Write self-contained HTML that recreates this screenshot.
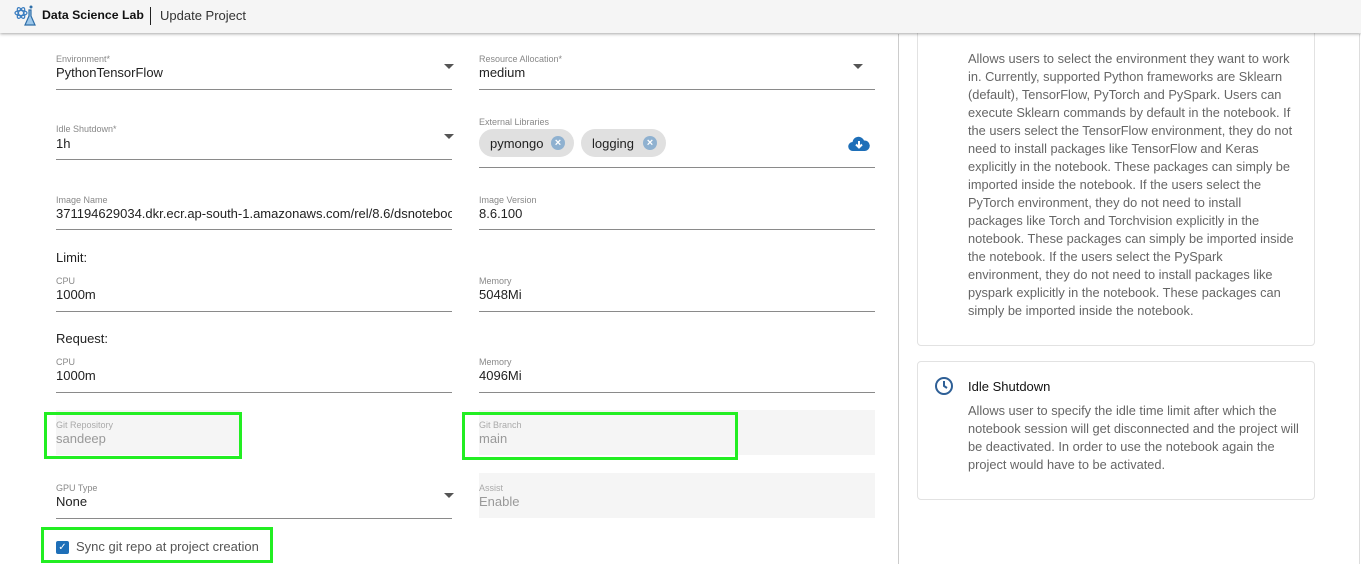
<!DOCTYPE html>
<html><head><style>
*{box-sizing:border-box;margin:0;padding:0}
body{width:1361px;height:564px;overflow:hidden;background:#fff;font-family:"Liberation Sans",sans-serif;position:relative;color:#222}
.hdr{position:absolute;left:0;top:0;width:1361px;height:33px;background:#f5f5f5;box-shadow:0 1px 3px rgba(0,0,0,.35);z-index:2}
.a{position:absolute}
.lbl{position:absolute;font-size:9px;color:#888}
.val{position:absolute;font-size:13px;color:#222}
.ul{position:absolute;height:1px;background:#8a8a8a}
.arr{position:absolute;width:0;height:0;border-left:5px solid transparent;border-right:5px solid transparent;border-top:5px solid #555}
.grey{position:absolute;background:#f5f5f5}
.green{position:absolute;border:3px solid #22ee22}
.card{position:absolute;border:1px solid #e2e2e2;border-radius:4px;background:#fff}
.txt{font-size:12.5px;line-height:18px;color:#666}
.chip{position:absolute;height:28px;border-radius:14px;background:#e0e0e0;font-size:13px;color:#222;padding:7px 0 0 11px}
.x{position:absolute;top:7px;width:14px;height:14px;border-radius:50%;background:#8fb1d0;color:#fff;font-size:11px;line-height:14px;text-align:center;font-weight:bold}
</style></head><body>
<div class="hdr">
<svg class="a" style="left:14px;top:4px" width="24" height="24" viewBox="0 0 24 24"><ellipse cx="7" cy="9" rx="6" ry="2.5" fill="none" stroke="#3a7dc0" stroke-width="1.2"/><ellipse cx="7" cy="9" rx="6" ry="2.5" transform="rotate(60 7 9)" fill="none" stroke="#3a7dc0" stroke-width="1.2"/><ellipse cx="7" cy="9" rx="6" ry="2.5" transform="rotate(-60 7 9)" fill="none" stroke="#3a7dc0" stroke-width="1.2"/><path d="M15 6v6l-4 9h10l-4-9V6z" fill="#9cc7ea" stroke="#2e6ea8" stroke-width="1.2"/><circle cx="17" cy="3" r="1.5" fill="#2e6ea8"/></svg>
<div class="a" style="left:42px;top:8px;font-size:12.3px;font-weight:bold;color:#111">Data Science Lab</div>
<div class="a" style="left:150px;top:7px;width:1px;height:18px;background:#222"></div>
<div class="a" style="left:160px;top:8px;font-size:13px;color:#333">Update Project</div>
</div>

<div class="lbl" style="left:56px;top:54px">Environment*</div><div class="val" style="left:56px;top:65px">PythonTensorFlow</div><div class="arr" style="left:444px;top:64px"></div><div class="ul" style="left:56px;top:89px;width:396px"></div>
<div class="lbl" style="left:479px;top:54px">Resource Allocation*</div><div class="val" style="left:479px;top:65px">medium</div><div class="arr" style="left:853px;top:64px"></div><div class="ul" style="left:479px;top:89px;width:396px"></div>

<div class="lbl" style="left:56px;top:124px">Idle Shutdown*</div><div class="val" style="left:56px;top:136px">1h</div><div class="arr" style="left:444px;top:134px"></div><div class="ul" style="left:56px;top:159px;width:396px"></div>
<div class="lbl" style="left:479px;top:117px">External Libraries</div>
<div class="chip" style="left:479px;top:129px;width:95px">pymongo<span class="x" style="left:72px">×</span></div>
<div class="chip" style="left:581px;top:129px;width:85px">logging<span class="x" style="left:62px">×</span></div>
<svg class="a" style="left:848px;top:136px" width="22" height="16" viewBox="0 0 22 16"><path d="M5 15a4.5 4.5 0 0 1-.5-9A6 6 0 0 1 16 4.5 5 5 0 0 1 17 15z" fill="#1e6fb8"/><path d="M11 5v6M8 8.5l3 3 3-3" stroke="#fff" stroke-width="2" fill="none"/></svg>
<div class="ul" style="left:479px;top:167px;width:396px"></div>

<div class="lbl" style="left:56px;top:195px">Image Name</div><div class="val" style="left:56px;top:206px;width:396px;overflow:hidden;white-space:nowrap">371194629034.dkr.ecr.ap-south-1.amazonaws.com/rel/8.6/dsnotebook</div><div class="ul" style="left:56px;top:229px;width:396px"></div>
<div class="lbl" style="left:479px;top:195px">Image Version</div><div class="val" style="left:479px;top:206px">8.6.100</div><div class="ul" style="left:479px;top:229px;width:396px"></div>

<div class="val" style="left:56px;top:250px">Limit:</div>
<div class="lbl" style="left:56px;top:276px">CPU</div><div class="val" style="left:56px;top:287px">1000m</div><div class="ul" style="left:56px;top:311px;width:396px"></div>
<div class="lbl" style="left:479px;top:276px">Memory</div><div class="val" style="left:479px;top:287px">5048Mi</div><div class="ul" style="left:479px;top:311px;width:396px"></div>

<div class="val" style="left:56px;top:331px">Request:</div>
<div class="lbl" style="left:56px;top:357px">CPU</div><div class="val" style="left:56px;top:368px">1000m</div><div class="ul" style="left:56px;top:392px;width:396px"></div>
<div class="lbl" style="left:479px;top:357px">Memory</div><div class="val" style="left:479px;top:368px">4096Mi</div><div class="ul" style="left:479px;top:392px;width:396px"></div>

<div class="grey" style="left:56px;top:410px;width:184px;height:45px"></div>
<div class="grey" style="left:479px;top:410px;width:396px;height:45px"></div>
<div class="lbl" style="left:56px;top:420px;color:#aaa">Git Repository</div><div class="val" style="left:56px;top:431px;color:#999">sandeep</div>
<div class="lbl" style="left:479px;top:420px;color:#aaa">Git Branch</div><div class="val" style="left:479px;top:431px;color:#999">main</div>
<div class="green" style="left:44px;top:412px;width:198px;height:47px"></div>
<div class="green" style="left:462px;top:412px;width:276px;height:48px"></div>

<div class="lbl" style="left:56px;top:483px">GPU Type</div><div class="val" style="left:56px;top:494px">None</div><div class="arr" style="left:444px;top:493px"></div><div class="ul" style="left:56px;top:518px;width:396px"></div>
<div class="grey" style="left:479px;top:473px;width:396px;height:45px"></div>
<div class="lbl" style="left:479px;top:483px;color:#aaa">Assist</div><div class="val" style="left:479px;top:494px;color:#999">Enable</div>

<div class="green" style="left:41px;top:527px;width:232px;height:36px"></div>
<div class="a" style="left:56px;top:541px;width:13px;height:13px;background:#1e6fb8;border-radius:2px;color:#fff;font-size:10px;line-height:13px;text-align:center">✓</div>
<div class="val" style="left:76px;top:539px;color:#555">Sync git repo at project creation</div>

<div class="a" style="left:898px;top:34px;width:1px;height:530px;background:#ccc"></div>
<div class="a" style="left:1359px;top:34px;width:1px;height:530px;background:#ddd"></div>

<div class="card" style="left:917px;top:20px;width:398px;height:326px">
<div class="txt" style="position:absolute;left:50px;top:29px;width:328px;font-size:12.8px">Allows users to select the environment they want to work in. Currently, supported Python frameworks are Sklearn (default), TensorFlow, PyTorch and PySpark. Users can execute Sklearn commands by default in the notebook. If the users select the TensorFlow environment, they do not need to install packages like TensorFlow and Keras explicitly in the notebook. These packages can simply be imported inside the notebook. If the users select the PyTorch environment, they do not need to install packages like Torch and Torchvision explicitly in the notebook. These packages can simply be imported inside the notebook. If the users select the PySpark environment, they do not need to install packages like pyspark explicitly in the notebook. These packages can simply be imported inside the notebook.</div>
</div>
<div class="card" style="left:917px;top:361px;width:398px;height:139px">
<svg class="a" style="left:16px;top:14px" width="20" height="20" viewBox="0 0 20 20"><circle cx="10" cy="10" r="8" fill="none" stroke="#2e5f96" stroke-width="2"/><path d="M10 5v5l3 2" stroke="#2e5f96" stroke-width="2" fill="none"/></svg>
<div class="a" style="left:50px;top:17px;font-size:13px;color:#111">Idle Shutdown</div>
<div class="txt" style="position:absolute;left:50px;top:40px;width:336px;font-size:12.8px">Allows user to specify the idle time limit after which the notebook session will get disconnected and the project will be deactivated. In order to use the notebook again the project would have to be activated.</div>
</div>
</body></html>
